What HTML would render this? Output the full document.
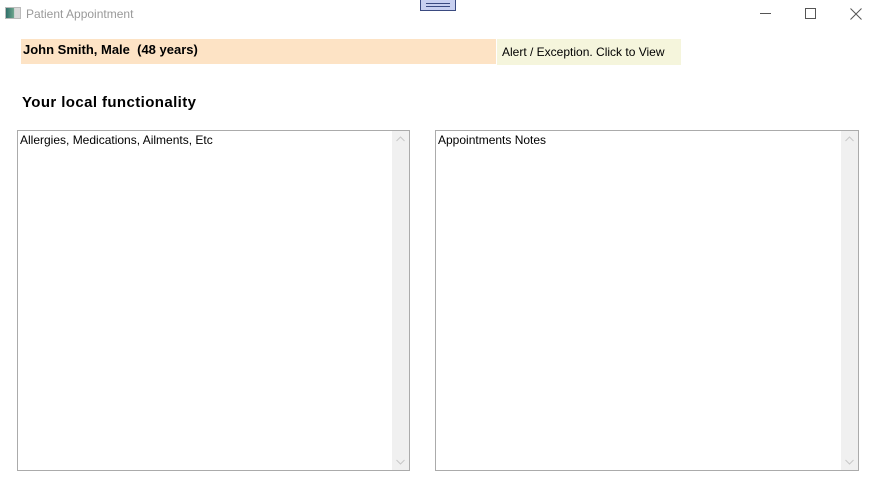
<!DOCTYPE html>
<html><head><meta charset="utf-8"><style>
*{margin:0;padding:0;box-sizing:border-box}
body{width:874px;height:495px;background:#fff;position:relative;overflow:hidden;font-family:"Liberation Sans",sans-serif;font-size:12px;color:#000}
.a{position:absolute}
.box{position:absolute;border:1px solid #ababab;background:#fff}
.sb{position:absolute;top:0;right:0;width:17px;bottom:0;background:#f0f0f0}
.sb svg{position:absolute;left:4px}
</style></head><body>
<div class="a" style="left:5px;top:7px;width:16px;height:12px;background:linear-gradient(90deg,#2f6f6a,#6ba38b 55%,#d8d8d8 60%);border:1px solid #bbb"></div>
<div class="a" style="left:26px;top:7px;color:#999;font-size:12px">Patient Appointment</div>
<div class="a" style="left:420px;top:0;width:36px;height:11px;background:#c8d0f0;border:1px solid #3a4a80;border-top:none"><div style="margin:3px 5px 0;height:4px;border-top:1px solid #3a4a80;border-bottom:1px solid #3a4a80"></div></div>
<div class="a" style="left:760px;top:13px;width:11px;height:1px;background:#555"></div>
<div class="a" style="left:805px;top:8px;width:11px;height:11px;border:1px solid #555"></div>
<svg class="a" style="left:850px;top:8px" width="12" height="12"><path d="M0.5 0.5L11.5 11.5M11.5 0.5L0.5 11.5" stroke="#555" stroke-width="1"/></svg>
<div class="a" style="left:21px;top:39px;width:475px;height:25px;background:#fde3c5;font-weight:bold;font-size:13px;padding:2px 0 0 2px;line-height:17px">John Smith, Male&nbsp; (48 years)</div>
<div class="a" style="left:497px;top:39px;width:184px;height:26px;background:#f5f5dc;padding:6px 0 0 5px;line-height:15px">Alert / Exception. Click to View</div>
<div class="a" style="left:22px;top:94px;font-weight:bold;font-size:15px;letter-spacing:0.4px;line-height:18px">Your local functionality</div>
<div class="box" style="left:17px;top:130px;width:393px;height:341px"><div style="padding:2px 2px;line-height:15px">Allergies, Medications, Ailments, Etc</div><div class="sb"><svg style="top:5px" width="9" height="6"><path d="M0.5 5L4.5 1L8.5 5" stroke="#c8c8c8" fill="none"/></svg><svg style="bottom:5px" width="9" height="6"><path d="M0.5 1L4.5 5L8.5 1" stroke="#c8c8c8" fill="none"/></svg></div></div>
<div class="box" style="left:435px;top:130px;width:424px;height:341px"><div style="padding:2px 2px;line-height:15px">Appointments Notes</div><div class="sb"><svg style="top:5px" width="9" height="6"><path d="M0.5 5L4.5 1L8.5 5" stroke="#c8c8c8" fill="none"/></svg><svg style="bottom:5px" width="9" height="6"><path d="M0.5 1L4.5 5L8.5 1" stroke="#c8c8c8" fill="none"/></svg></div></div>
</body></html>
